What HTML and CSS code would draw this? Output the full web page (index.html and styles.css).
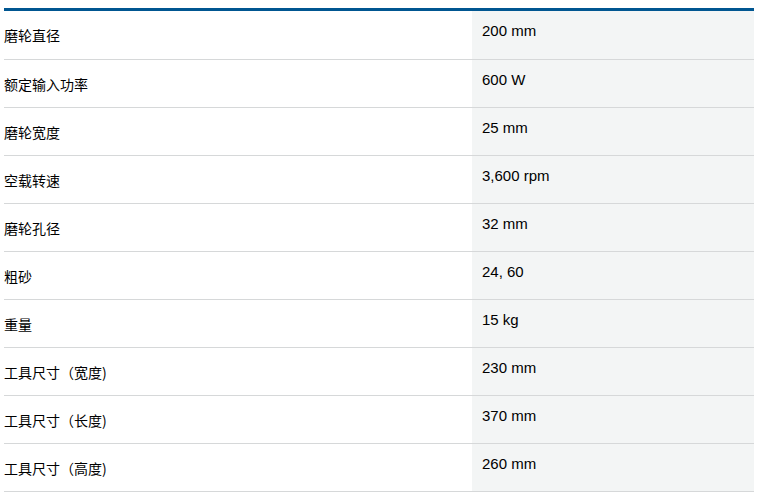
FILE: index.html
```html
<!DOCTYPE html>
<html lang="zh">
<head>
<meta charset="utf-8">
<link rel="stylesheet" href="styles.css">
</head>
<body>
<div class="spec-table">
  <div class="row first"><div class="label">磨轮直径</div><div class="value">200 mm</div></div>
  <div class="row"><div class="label">额定输入功率</div><div class="value">600 W</div></div>
  <div class="row"><div class="label">磨轮宽度</div><div class="value">25 mm</div></div>
  <div class="row"><div class="label">空载转速</div><div class="value">3,600 rpm</div></div>
  <div class="row"><div class="label">磨轮孔径</div><div class="value">32 mm</div></div>
  <div class="row"><div class="label">粗砂</div><div class="value">24, 60</div></div>
  <div class="row"><div class="label">重量</div><div class="value">15 kg</div></div>
  <div class="row"><div class="label">工具尺寸（宽度)</div><div class="value">230 mm</div></div>
  <div class="row"><div class="label">工具尺寸（长度)</div><div class="value">370 mm</div></div>
  <div class="row"><div class="label">工具尺寸（高度)</div><div class="value">260 mm</div></div>
</div>
</body>
</html>
```
FILE: styles.css
```css
html, body {
  background: #ffffff;
}
body {
  margin: 8px 0 0 4px;
  color: #000000;
  font-family: "Liberation Sans", Arial, "Noto Sans CJK SC", sans-serif;
}
.spec-table {
  width: 750px;
  border-top: 3px solid #005691;
}
.row {
  display: grid;
  grid-template-columns: 468px 282px;
  height: 47px;
  border-bottom: 1px solid #d6d8d9;
}
.row.first {
  height: 48px;
}
.label {
  display: flex;
  align-items: center;
  font-family: "Noto Sans CJK SC", sans-serif;
  font-size: 14px;
  line-height: 20px;
}
.value {
  background: #f3f5f5;
  padding: 9px 10px 0 10px;
  font-size: 15px;
  line-height: 21px;
}
```
